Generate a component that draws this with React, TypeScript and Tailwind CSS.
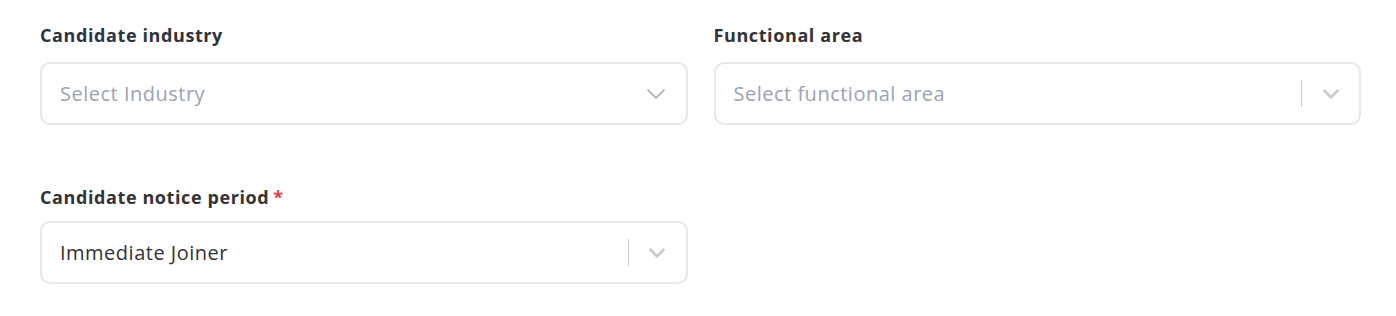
import { ChevronDown } from 'lucide-react';

function Label({ text, required, dark }: { text: string; required?: boolean; dark?: boolean }) {
  return (
    <div className={`h-[22px] text-[18px] font-bold leading-[22px] tracking-[0.6px] ${dark ? 'text-[#2d3340]' : 'text-[#333333]'}`}>
      {text}
      {required && <span className="ml-1 text-[#e53e3e]">*</span>}
    </div>
  );
}

function PlainSelect({ placeholder }: { placeholder: string }) {
  return (
    <div className="mt-[16px] flex h-[63px] items-center justify-between rounded-[10px] border-2 border-[#e5e7eb] bg-white pl-[18px] pr-[14px]">
      <span className="text-[20px] tracking-[0.5px] text-[#9ca3af]">{placeholder}</span>
      <ChevronDown size={32} className="text-[#9ca3af]" strokeWidth={1.1} />
    </div>
  );
}

function ReactSelect({ value, placeholder, mt }: { value?: string; placeholder: string; mt: string }) {
  return (
    <div className={`${mt} flex h-[63px] items-center rounded-[10px] border-2 border-[#e5e7eb] bg-white pl-[18px]`}>
      <span className={`flex-1 text-[20px] tracking-[0.5px] ${value ? 'text-[#333333]' : 'text-[#9ca3af]'}`}>
        {value ?? placeholder}
      </span>
      <div className="h-[27px] w-px bg-[#cccccc]" />
      <div className="flex w-[57px] items-center justify-center">
        <ChevronDown size={26} className="text-[#cccccc]" strokeWidth={2.6} />
      </div>
    </div>
  );
}

export default function App() {
  return (
    <div className="min-h-[316px] w-[1396px] bg-white pl-[40px] pr-[35px] pt-[24px] font-['Open_Sans','Noto_Sans',sans-serif]">
      <div className="grid grid-cols-2 gap-x-[26px] gap-y-[61px]">
        <div>
          <Label text="Candidate industry" dark />
          <PlainSelect placeholder="Select Industry" />
        </div>
        <div>
          <Label text="Functional area" />
          <ReactSelect placeholder="Select functional area" mt="mt-[16px]" />
        </div>
        <div>
          <Label text="Candidate notice period" required />
          <ReactSelect value="Immediate Joiner" placeholder="Select" mt="mt-[13px]" />
        </div>
      </div>
    </div>
  );
}
